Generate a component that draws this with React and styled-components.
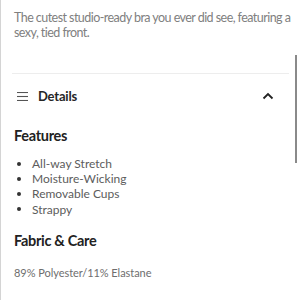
import React from 'react';
import styled, { createGlobalStyle } from 'styled-components';

const GlobalStyle = createGlobalStyle`
  body {
    margin: 0;
    background: #fff;
    font-family: Lato, "Noto Sans", sans-serif;
    overflow: hidden;
  }
`;

const Page = styled.div`
  position: relative;
  width: 300px;
  height: 300px;
  border-left: 1px solid #d4d4d4;
  box-sizing: border-box;
  overflow: hidden;
`;

const Description = styled.p`
  margin: 0;
  padding: 10px 4px 0 13px;
  font-size: 12.5px;
  letter-spacing: -0.55px;
  line-height: 15px;
  color: #808080;
`;

const Divider = styled.hr`
  margin: 33px 11px 0 11px;
  border: 0;
  border-top: 1px solid #ededed;
`;

const AccordionHeader = styled.div`
  display: flex;
  align-items: center;
  padding: 14px 26px 0 16px;
  height: 16px;
`;

const HeaderTitle = styled.span`
  flex: 1;
  margin-left: 10px;
  font-size: 13px;
  letter-spacing: -0.2px;
  font-weight: 700;
  color: #262626;
`;

const Section = styled.div`
  padding: 0 14px 0 13px;
`;

const Heading = styled.h3`
  margin: ${(p) => p.$top}px 0 0 0;
  font-size: 14.5px;
  letter-spacing: -0.3px;
  line-height: 20px;
  font-weight: 700;
  color: #222;
`;

const List = styled.div`
  display: flex;
  flex-direction: column;
  margin-top: 10px;
`;

const Item = styled.div`
  display: flex;
  align-items: center;
  gap: 11px;
  padding-left: 3px;
  font-size: 12px;
  line-height: 15.2px;
  color: #5c5c5c;
`;

const Bullet = styled.span`
  width: 4px;
  height: 4px;
  border-radius: 50%;
  background: #333;
  flex-shrink: 0;
`;

const Body = styled.p`
  margin: 14px 0 0 0;
  font-size: 11px;
  letter-spacing: -0.05px;
  line-height: 15px;
  color: #6e6e6e;
`;

const ScrollThumb = styled.div`
  position: absolute;
  right: 3px;
  top: 55px;
  width: 2px;
  height: 108px;
  background: #8a8a8a;
`;

const MenuIcon = () => (
  <svg width="11" height="9" viewBox="0 0 11 9">
    <g stroke="#555" strokeWidth="1.1">
      <line x1="0" y1="0.5" x2="11" y2="0.5" />
      <line x1="0" y1="4.5" x2="11" y2="4.5" />
      <line x1="0" y1="8.5" x2="11" y2="8.5" />
    </g>
  </svg>
);

const ChevronUp = () => (
  <svg width="12" height="8" viewBox="0 0 12 8">
    <polyline points="1.5,6.5 6,2 10.5,6.5" fill="none" stroke="#222" strokeWidth="1.8" />
  </svg>
);

const features = ['All-way Stretch', 'Moisture-Wicking', 'Removable Cups', 'Strappy'];

export default function App() {
  return (
    <>
      <GlobalStyle />
      <Page>
        <Description>
          The cutest studio-ready bra you ever did see, featuring a sexy, tied front.
        </Description>
        <Divider />
        <AccordionHeader>
          <MenuIcon />
          <HeaderTitle>Details</HeaderTitle>
          <ChevronUp />
        </AccordionHeader>
        <Section>
          <Heading $top={22}>Features</Heading>
          <List>
            {features.map((f) => (
              <Item key={f}>
                <Bullet />
                {f}
              </Item>
            ))}
          </List>
          <Heading $top={14}>Fabric &amp; Care</Heading>
          <Body>89% Polyester/11% Elastane</Body>
        </Section>
        <ScrollThumb />
      </Page>
    </>
  );
}
